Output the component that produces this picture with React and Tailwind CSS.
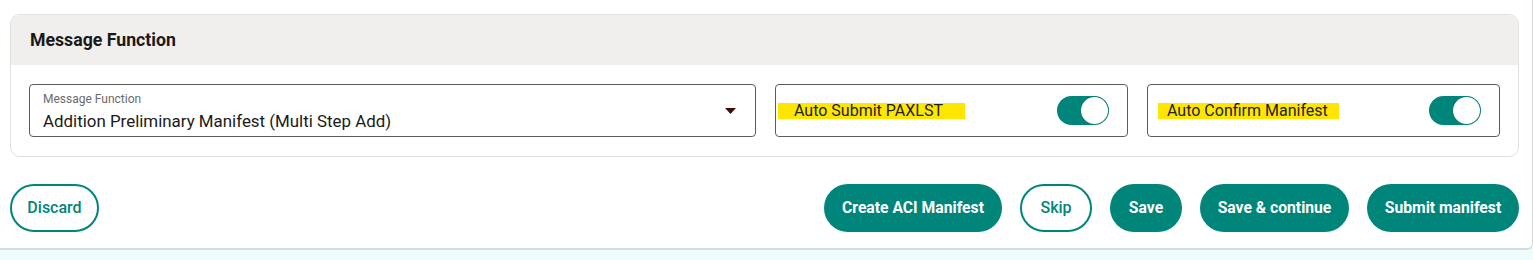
const font = { fontFamily: 'Roboto, "Liberation Sans", sans-serif' }

function Toggle() {
  return (
    <div className="w-[52px] h-[29px] rounded-full bg-[#00857a] flex items-center justify-end pr-px shrink-0">
      <div className="w-[27px] h-[27px] rounded-full bg-white shadow-[0_0_1px_rgba(0,0,0,0.4)]" />
    </div>
  )
}

function ToggleBox({ label, hlClass }) {
  return (
    <div className="w-[353px] h-[53px] border border-[#5f5b58] rounded-[4px] flex items-center justify-between pr-[18px] shrink-0">
      <span className={`bg-[#ffe600] text-[16px] leading-4 text-[#222] ${hlClass}`}>{label}</span>
      <Toggle />
    </div>
  )
}

function Btn({ children, outline, w }) {
  return outline ? (
    <button className={`h-[48px] ${w} rounded-full border-2 border-[#00857a] text-[#00857a] text-[16px] font-medium bg-white whitespace-nowrap`}>
      {children}
    </button>
  ) : (
    <button className={`h-[48px] ${w} rounded-full bg-[#00857a] text-white text-[15.7px] font-bold whitespace-nowrap`}>
      {children}
    </button>
  )
}

export default function App() {
  return (
    <div className="bg-[#effcfc] h-[260px] w-[1533px]" style={font}>
      <div className="bg-white pt-[14px] pl-[10px] pb-[16px] border-b-2 border-r border-[#d3dcdc] rounded-br-[6px]">
        <div className="w-[1509px] border border-[#e3e0db] rounded-[10px] overflow-hidden">
          <div className="h-[50px] bg-[#f1efed] flex items-center pl-[19px]">
            <h2 className="text-[17.7px] font-bold text-[#1a1a1a] mt-[1px]">Message Function</h2>
          </div>
          <div className="flex gap-[19px] pt-[19px] pb-[19px] px-[18px]">
            <div className="flex-1 h-[53px] border border-[#5f5b58] rounded-[4px] pl-[13px] pr-[18px] flex items-center justify-between">
              <div className="flex flex-col pt-[2px]">
                <span className="text-[12px] leading-[14px] text-[#6b6b6b]">Message Function</span>
                <span className="text-[16.9px] leading-[22px] text-[#1a1a1a] mt-[4px]">Addition Preliminary Manifest (Multi Step Add)</span>
              </div>
              <svg width="11" height="6" viewBox="0 0 11 6" className="mt-[1px] mr-[1px]">
                <path d="M0 0h11L5.5 6z" fill="#3d0d0d" />
              </svg>
            </div>
            <ToggleBox label="Auto Submit PAXLST" hlClass="ml-[2px] pl-[16px] pr-[22px]" />
            <ToggleBox label="Auto Confirm Manifest" hlClass="ml-[10px] pl-[9px] pr-[11px]" />
          </div>
        </div>
        <div className="w-[1509px] mt-[27px] flex items-center">
          <Btn outline w="w-[89px]">Discard</Btn>
          <div className="ml-auto flex gap-[18px]">
            <Btn w="w-[178px]">Create ACI Manifest</Btn>
            <Btn outline w="w-[72px]">Skip</Btn>
            <Btn w="w-[72px]">Save</Btn>
            <Btn w="w-[149px]">Save &amp; continue</Btn>
            <Btn w="w-[152px]">Submit manifest</Btn>
          </div>
        </div>
      </div>
    </div>
  )
}
